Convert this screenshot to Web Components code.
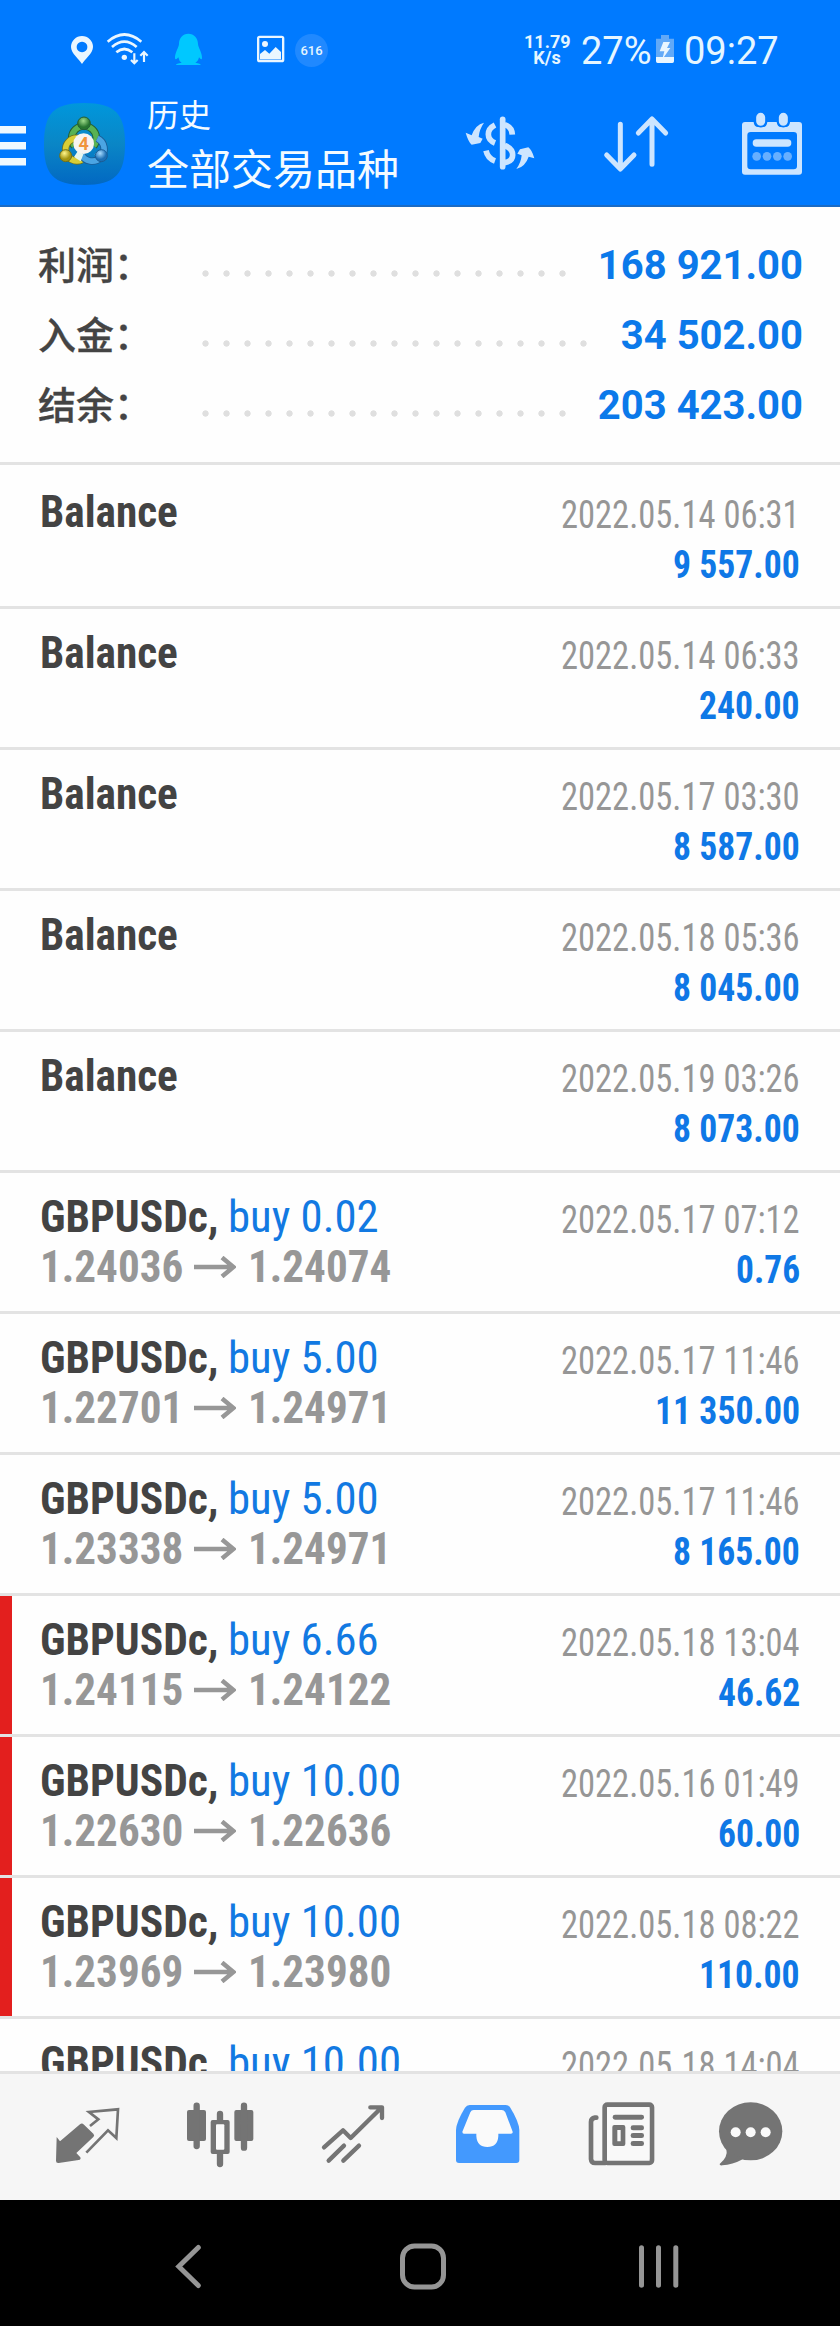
<!DOCTYPE html>
<html lang="zh-CN">
<head>
<meta charset="UTF-8">
<title>历史</title>
<style>
  body {
    margin: 0;
    width: 840px;
    height: 2326px;
    overflow: hidden;
    font-family: "Roboto", "Noto Sans CJK SC", sans-serif;
  }
</style>
</head>
<body>
<history-app></history-app>

<script>
const deals = [
  { name: "Balance", time: "2022.05.14 06:31", profit: "9 557.00" },
  { name: "Balance", time: "2022.05.14 06:33", profit: "240.00" },
  { name: "Balance", time: "2022.05.17 03:30", profit: "8 587.00" },
  { name: "Balance", time: "2022.05.18 05:36", profit: "8 045.00" },
  { name: "Balance", time: "2022.05.19 03:26", profit: "8 073.00" },
  { name: "GBPUSDc,", volume: "buy 0.02", open: "1.24036", close: "1.24074", time: "2022.05.17 07:12", profit: "0.76" },
  { name: "GBPUSDc,", volume: "buy 5.00", open: "1.22701", close: "1.24971", time: "2022.05.17 11:46", profit: "11 350.00" },
  { name: "GBPUSDc,", volume: "buy 5.00", open: "1.23338", close: "1.24971", time: "2022.05.17 11:46", profit: "8 165.00" },
  { name: "GBPUSDc,", volume: "buy 6.66", open: "1.24115", close: "1.24122", time: "2022.05.18 13:04", profit: "46.62", marked: true },
  { name: "GBPUSDc,", volume: "buy 10.00", open: "1.22630", close: "1.22636", time: "2022.05.16 01:49", profit: "60.00", marked: true },
  { name: "GBPUSDc,", volume: "buy 10.00", open: "1.23969", close: "1.23980", time: "2022.05.18 08:22", profit: "110.00", marked: true },
  { name: "GBPUSDc,", volume: "buy 10.00", open: "", close: "", time: "2022.05.18 14:04", profit: "" }
];

// Condensed text: takes ratio x its normal width, with the font's own
// condensed cut where there is one and a horizontal squeeze for the rest
class NarrowText extends HTMLElement {
  constructor() {
    super();
    this.attachShadow({ mode: 'open' });
    this.shadowRoot.innerHTML = `
      <style>
        :host { display: inline-block; white-space: nowrap; }
        span { display: inline-block; transform-origin: 0 50%; }
      </style>
      <span><slot></slot></span>
    `;
  }

  connectedCallback() {
    const span = this.shadowRoot.querySelector('span');
    const width = span.getBoundingClientRect().width * Number(this.getAttribute('ratio'));
    span.style.fontStretch = 'condensed';
    const condensed = span.getBoundingClientRect().width;
    if (condensed > 0) {
      span.style.transform = `scaleX(${width / condensed})`;
      this.style.width = `${width}px`;
    }
  }
}

class StatusBar extends HTMLElement {
  constructor() {
    super();
    this.attachShadow({ mode: 'open' });
    this.shadowRoot.innerHTML = `
      <style>
        :host {
          display: flex;
          align-items: center;
          box-sizing: border-box;
          height: 82px;
          padding: 18px 0 0 68px;
          color: #e6f6ff;
        }
        svg { display: block; height: 36px; flex: none; fill: #eaf6ff; }
        .badge {
          width: 33px;
          height: 33px;
          margin-left: 7px;
          border-radius: 50%;
          background: #2089ff;
          font-size: 13px;
          font-weight: 500;
          line-height: 33px;
          text-align: center;
        }
        .speed {
          width: 46px;
          margin-left: 196px;
          font-size: 18px;
          font-weight: 700;
          line-height: 16px;
          text-align: center;
        }
        .big { font-size: 38px; line-height: 44px; margin-top: 2px; white-space: nowrap; }
        .percent { width: 72px; margin-left: 11px; }
        .time { margin-left: 7px; }
      </style>
      <svg width="28" viewBox="204 96 84 108"><path fill-rule="evenodd" d="M246 192C238 178 213 160 213 141a33 33 0 0 1 66 0C279 160 254 178 246 192zM246 125a16 16 0 1 0 .1 0z"/></svg>
      <svg width="48" viewBox="312 96 144 108" style="margin-left:8px">
        <g fill="none" stroke="#eaf6ff" stroke-width="8">
          <path d="M323 125Q373 82 424 125M336 141Q373 109 410 141M349 157Q373 137 397 157"/>
          <path d="M403 160V190M393 180L403 190L413 180M432 186V157M421 167L432 156L443 167" stroke-width="6.5"/>
        </g>
        <circle cx="373" cy="172" r="8"/>
      </svg>
      <svg width="34" viewBox="516 96 102 108" style="margin-left:20px"><path fill="#00c8ff" d="M565 101C548 101 537 114 537 132C537 142 524 158 525 175Q527 182 535 172Q537 184 545 188Q528 190 528 195H602Q602 190 586 188Q595 184 597 172Q605 182 606 175C607 158 594 142 594 132C594 114 582 101 565 101z"/></svg>
      <svg width="34" viewBox="762 96 102 108" style="margin-left:48px"><path fill-rule="evenodd" d="M779 107H845Q853 107 853 115V179Q853 187 845 187H779Q771 187 771 179V115Q771 107 779 107zM778 114V179H846V114zM780 174V162L795 150L808 161L827 141L843 156V178H780z"/><circle cx="795" cy="132" r="9"/></svg>
      <div class="badge">616</div>
      <div class="speed">11.79<br>K/s</div>
      <div class="big percent">27%</div>
      <svg width="24" viewBox="696 96 72 108">
        <path fill="#62a9f7" d="M720 105H744V116H759V172H705V116H720z"/>
        <path d="M705 171H759V184Q759 189 754 189H710Q705 189 705 184zM727 126H747L738 144H748L724 178L730 154H716z"/>
      </svg>
      <div class="big time">09:27</div>
    `;
  }
}

class TitleBar extends HTMLElement {
  constructor() {
    super();
    this.attachShadow({ mode: 'open' });
    this.shadowRoot.innerHTML = `
      <style>
        :host {
          display: flex;
          align-items: center;
          box-sizing: border-box;
          height: 123px;
          padding-right: 34px;
          color: #f4fbff;
        }
        svg { display: block; flex: none; }
        .menu { fill: #f0f9ff; margin-top: 5px; }
        .logo { margin-left: 17px; }
        .titles {
          flex: 1;
          margin-left: 22px;
          font-family: "Noto Sans CJK SC", sans-serif;
          white-space: nowrap;
        }
        .titles ::slotted(*) { display: block; }
        .title { font-size: 32px; line-height: 46px; }
        .subtitle { font-size: 42px; line-height: 62px; }
        .actions { display: flex; fill: #cde5ff; stroke: #cde5ff; stroke-linecap: round; stroke-linejoin: round; }
      </style>
      <svg class="menu" width="26" height="40" viewBox="0 0 26 40"><path d="M0 0H26V7.5H0zM0 16H26V23.5H0zM0 32H26V39.5H0z"/></svg>
      <svg class="logo" width="82" height="82" viewBox="129 308 246 246">
        <defs>
          <linearGradient id="bg" x1="0" y1="0" x2="0" y2="1"><stop offset="0" stop-color="#0097dc"/><stop offset=".5" stop-color="#0a86c6"/><stop offset="1" stop-color="#0268c2"/></linearGradient>
          <radialGradient id="green" cx=".45" cy=".3"><stop offset="0" stop-color="#9fdc8a"/><stop offset="1" stop-color="#27752f"/></radialGradient>
          <radialGradient id="gold" cx=".4" cy=".3"><stop offset="0" stop-color="#fff68c"/><stop offset="1" stop-color="#a29411"/></radialGradient>
          <radialGradient id="blue" cx=".4" cy=".3"><stop offset="0" stop-color="#a9dcff"/><stop offset="1" stop-color="#1c6fb5"/></radialGradient>
        </defs>
        <path fill="url(#bg)" d="M252 308C345 308 375 340 375 431S345 554 252 554S132 522 132 431S160 308 252 308z"/>
        <g fill="none">
          <path d="M223 437A37 37 0 1 1 281 437" stroke="#235f35" stroke-width="23"/>
          <path d="M223 437A37 37 0 1 1 281 437" stroke="#58b254" stroke-width="17"/>
          <path d="M236 414A34 34 0 1 0 246 478" stroke="#70711b" stroke-width="22"/>
          <path d="M236 414A34 34 0 1 0 246 478" stroke="#d8ce36" stroke-width="17"/>
          <path d="M244 462A36 36 0 1 0 292 414" stroke="#1b5c95" stroke-width="22"/>
          <path d="M244 462A36 36 0 1 0 292 414" stroke="#4ba5e3" stroke-width="17"/>
        </g>
        <path fill="#e7f6ee" d="M222 470L236 448L250 462L242 483zM284 462L300 450L294 478z"/>
        <circle cx="252" cy="369" r="19" fill="url(#green)" stroke="#235f35" stroke-width="3"/>
        <circle cx="197" cy="466" r="18" fill="url(#gold)" stroke="#70711b" stroke-width="3"/>
        <circle cx="304" cy="466" r="18" fill="url(#blue)" stroke="#1b5c95" stroke-width="3"/>
        <circle cx="251" cy="430" r="31" fill="#f6f4f2"/>
        <text x="251" y="449" text-anchor="middle" font-family="Roboto, sans-serif" font-size="54" font-weight="700" fill="#f0943c">4</text>
      </svg>
      <div class="titles">
        <div class="title"><slot name="title"></slot></div>
        <div class="subtitle"><slot name="subtitle"></slot></div>
      </div>
      <div class="actions">
        <svg width="76" height="72" viewBox="126 322 228 216">
          <path fill="none" stroke-width="17" stroke-linecap="butt" d="M225 373Q205 383 205 401T225 427M198 450Q203 473 225 481M254 372Q276 379 277 402M254 434Q278 444 278 463T254 486"/>
          <path fill="none" stroke-width="17" d="M248 356V498"/>
          <path stroke="none" d="M137 396L155 404Q166 372 192 366Q178 386 176 409L188 414L181 427L155 432Q145 424 137 396zM343 473L326 468Q316 498 289 505Q303 486 305 464L292 459L300 446L325 440Q336 448 343 473z"/>
        </svg>
        <svg width="72" height="72" viewBox="540 322 216 216" style="margin-left:62px"><path fill="none" stroke-width="15" d="M601 371V504M560 463L601 505L642 463M696 491V356M655 397L696 355L737 397"/></svg>
        <svg width="68" height="72" viewBox="954 322 204 216" style="margin-left:66px" stroke="none">
          <path fill-rule="evenodd" d="M975 364H1001Q1002 379 1015 379H1030Q1040 379 1042 364H1070Q1072 379 1083 379H1096Q1109 379 1110 364H1137Q1146 364 1146 373V513Q1146 522 1137 522H975Q966 522 966 513V373Q966 364 975 364zM992 394Q982 394 982 404V496Q982 506 992 506H1121Q1131 506 1131 496V404Q1131 394 1121 394z"/>
          <g stroke="#007aff" stroke-width="5"><rect x="1006" y="334" width="32" height="44" rx="16"/><rect x="1074" y="334" width="32" height="44" rx="16"/></g>
          <rect x="998" y="416" width="116" height="22" rx="11"/>
          <g opacity=".5"><circle cx="1010" cy="467" r="13"/><circle cx="1041" cy="467" r="13"/><circle cx="1072" cy="467" r="13"/><circle cx="1103" cy="467" r="13"/></g>
        </svg>
      </div>
    `;
  }
}

class SummaryRow extends HTMLElement {
  constructor() {
    super();
    this.attachShadow({ mode: 'open' });
  }

  connectedCallback() {
    this.shadowRoot.innerHTML = `
      <style>
        :host { display: flex; height: 70px; align-items: center; padding: 0 37px 0 38px; }
        .label {
          width: 157px;
          padding-bottom: 5px;
          font: 500 38px/56px "Noto Sans CJK SC", sans-serif;
          color: #444;
          -webkit-text-stroke: 0.3px #444;
        }
        .dots {
          flex: 1;
          height: 7px;
          margin: 17px 20px 0 0;
          background: radial-gradient(circle at 50% 50%, #dfdfdf 2.8px, transparent 3.5px) 0 0 / 21px 7px repeat-x;
        }
        .value { padding-top: 1px; font-size: 40px; font-weight: 700; line-height: 48px; color: #0b79ea; white-space: pre; }
      </style>
      <div class="label">${this.getAttribute('label')}</div>
      <div class="dots"></div>
      <div class="value">${this.getAttribute('value')}</div>
    `;
  }
}

class DealRow extends HTMLElement {
  constructor() {
    super();
    this.attachShadow({ mode: 'open' });
  }

  set deal(deal) {
    const volume = deal.volume ? `<narrow-text class="volume" ratio="0.885">${deal.volume}</narrow-text>` : '';
    const prices = deal.open ? `
      <narrow-text class="price" ratio="0.853">${deal.open}</narrow-text>
      <svg width="42" height="22" viewBox="0 0 42 22"><path d="M0 11H40M28 1.5L39.5 11L28 20.5" fill="none" stroke="#979797" stroke-width="4.5"/></svg>
      <narrow-text class="price" ratio="0.853">${deal.close}</narrow-text>
    ` : '';

    this.shadowRoot.innerHTML = `
      <style>
        :host {
          display: block;
          box-sizing: border-box;
          height: 141px;
          padding: 19px 40px 0 40px;
          border-bottom: 3px solid #e3e3e3;
        }
        :host([first]) { height: 144px; padding-top: 22px; }
        :host([marked]) { background: linear-gradient(#e31f1e, #e31f1e) 0 0 / 12px 138px no-repeat; }
        .line { display: flex; height: 50px; align-items: baseline; line-height: 50px; font-size: 45px; }
        /* keeps the baseline of a line that has no text on the left */
        .line::before { content: "\\200b"; }
        .name { font-weight: 700; color: #434343; }
        .volume { margin-left: 9px; color: #1279e2; }
        .price { font-weight: 700; color: #979797; }
        svg { margin: 0 12px 0 11px; align-self: center; }
        .right { margin: 1px 0 0 auto; position: relative; top: 1px; font-size: 38px; }
        .time { color: #969696; }
        .profit { font-weight: 700; color: #0f78e6; }
      </style>
      <div class="line">
        <narrow-text class="name" ratio="0.852">${deal.name}</narrow-text>
        ${volume}
        <narrow-text class="right time" ratio="0.809">${deal.time}</narrow-text>
      </div>
      <div class="line">
        ${prices}
        <narrow-text class="right profit" ratio="0.838">${deal.profit}</narrow-text>
      </div>
    `;
  }
}

class TabBar extends HTMLElement {
  constructor() {
    super();
    this.attachShadow({ mode: 'open' });
    this.shadowRoot.innerHTML = `
      <style>
        :host {
          display: grid;
          grid-template-columns: repeat(6, 1fr);
          justify-items: center;
          box-sizing: border-box;
          height: 129px;
          padding: 20px 20px 0;
          border-top: 3px solid #e3e3e3;
          background: #f6f6f6;
        }
        svg { display: block; width: 80px; height: 80px; fill: #747474; }
        .stroke { fill: none; stroke: #747474; stroke-linecap: round; stroke-linejoin: round; }
      </style>
      <svg viewBox="140 342 240 240">
        <path d="M169 471L179 484L239 433Q245 428 251 434L279 461Q284 466 279 471L228 519L240 532Q243 539 235 540L175 549Q167 550 167 542z"/>
        <path fill="none" stroke="#747474" stroke-width="8" d="M269 438L294 418L266 396L353 388L348 474L323 451L258 518"/>
      </svg>
      <svg viewBox="540 342 240 240">
        <rect x="561" y="390" width="57" height="93" rx="6"/><rect x="703" y="390" width="57" height="93" rx="6"/>
        <path class="stroke" stroke-width="19" d="M590 377V498M732 377V503M660 402V422M660 520V552"/>
        <path fill-rule="evenodd" d="M638 420H683Q689 420 689 426V516Q689 522 683 522H638Q632 522 632 516V426Q632 420 638 420z"/>
        <rect x="648" y="433" width="25" height="76" rx="3" fill="#fafafa"/>
      </svg>
      <svg viewBox="940 342 240 240">
        <path class="stroke" stroke-width="13" d="M973 502L1030 451L1053 474L1142 386M1112 382H1147V414M987 542L1033 497M1031 542L1078 497"/>
      </svg>
      <svg viewBox="80 342 240 240">
        <path fill="#4399fe" d="M107 540V450Q108 425 134 383Q139 375 148 375H256Q265 375 270 383Q296 425 297 450V540Q297 549 288 549H116Q107 549 107 540z"/>
        <path fill="#fafafa" d="M126 455L150 397Q153 390 160 390H244Q251 390 255 397L277 455Q278 461 272 461H234V468Q232 501 201 501Q170 501 168 468V461H131Q126 461 126 455z"/>
      </svg>
      <svg viewBox="480 342 240 240">
        <rect class="stroke" x="554" y="374" width="142" height="175" rx="8" stroke-width="14"/>
        <rect x="561" y="383" width="127" height="157" rx="4" fill="#f9f9f9"/>
        <path class="stroke" stroke-width="14" d="M529 413H525Q513 415 513 426V537Q514 549 525 549H556"/>
        <rect x="578" y="404" width="94" height="15" rx="7"/>
        <path fill-rule="evenodd" d="M583 435H610Q616 435 616 441V492Q616 498 610 498H583Q577 498 577 492V441Q577 435 583 435zM592 450V484H602V450z"/>
        <rect x="632" y="436" width="40" height="15" rx="7"/><rect x="632" y="459" width="40" height="15" rx="7"/><rect x="632" y="483" width="40" height="15" rx="7"/>
      </svg>
      <svg viewBox="880 342 240 240">
        <ellipse cx="993" cy="454" rx="95" ry="87"/>
        <path d="M920 506Q926 530 900 552Q899 557 908 556Q938 555 969 538z"/>
        <g fill="#fafafa"><circle cx="948" cy="457" r="15"/><circle cx="993" cy="457" r="15"/><circle cx="1038" cy="457" r="15"/></g>
      </svg>
    `;
  }
}

class SystemNav extends HTMLElement {
  constructor() {
    super();
    this.attachShadow({ mode: 'open' });
    this.shadowRoot.innerHTML = `
      <style>
        :host {
          display: grid;
          grid-template-columns: repeat(3, 1fr);
          justify-items: center;
          box-sizing: border-box;
          height: 126px;
          padding: 36px 65px 0 70px;
          background: #000;
        }
        svg { width: 60px; height: 60px; fill: none; stroke: #959595; stroke-width: 5; stroke-linecap: round; }
      </style>
      <svg viewBox="0 0 60 60"><path d="M40.3 11.5L20.8 30.5L40.3 49.5"/></svg>
      <svg viewBox="0 0 60 60"><rect x="9.5" y="10" width="41" height="41" rx="12"/></svg>
      <svg viewBox="0 0 60 60"><path d="M13.5 11.7V49.3M30.5 11.7V49.3M47.8 11.7V49.3"/></svg>
    `;
  }
}

class HistoryApp extends HTMLElement {
  constructor() {
    super();
    this.attachShadow({ mode: 'open' });
  }

  connectedCallback() {
    this.shadowRoot.innerHTML = `
      <style>
        :host { display: flex; flex-direction: column; width: 840px; height: 2326px; background: #fefefe; }
        header { flex: none; background: #007aff; border-bottom: 2px solid #1b6bc4; }
        .summary { flex: none; box-sizing: border-box; height: 258px; padding-top: 23px; border-bottom: 3px solid #e3e3e3; }
        .deals { flex: 1; min-height: 0; overflow: hidden; }
        tab-bar, system-nav { flex: none; }
      </style>
      <header>
        <status-bar></status-bar>
        <title-bar>
          <span slot="title">历史</span>
          <span slot="subtitle">全部交易品种</span>
        </title-bar>
      </header>
      <section class="summary">
        <summary-row label="利润：" value="168 921.00"></summary-row>
        <summary-row label="入金：" value="34 502.00"></summary-row>
        <summary-row label="结余：" value="203 423.00"></summary-row>
      </section>
      <section class="deals"></section>
      <tab-bar></tab-bar>
      <system-nav></system-nav>
    `;

    const list = this.shadowRoot.querySelector('.deals');
    deals.forEach((deal, index) => {
      const row = document.createElement('deal-row');
      row.toggleAttribute('first', index === 0);
      row.toggleAttribute('marked', Boolean(deal.marked));
      list.appendChild(row);
      row.deal = deal;
    });
  }
}

customElements.define('narrow-text', NarrowText);
customElements.define('status-bar', StatusBar);
customElements.define('title-bar', TitleBar);
customElements.define('summary-row', SummaryRow);
customElements.define('deal-row', DealRow);
customElements.define('tab-bar', TabBar);
customElements.define('system-nav', SystemNav);
customElements.define('history-app', HistoryApp);
</script>
</body>
</html>
